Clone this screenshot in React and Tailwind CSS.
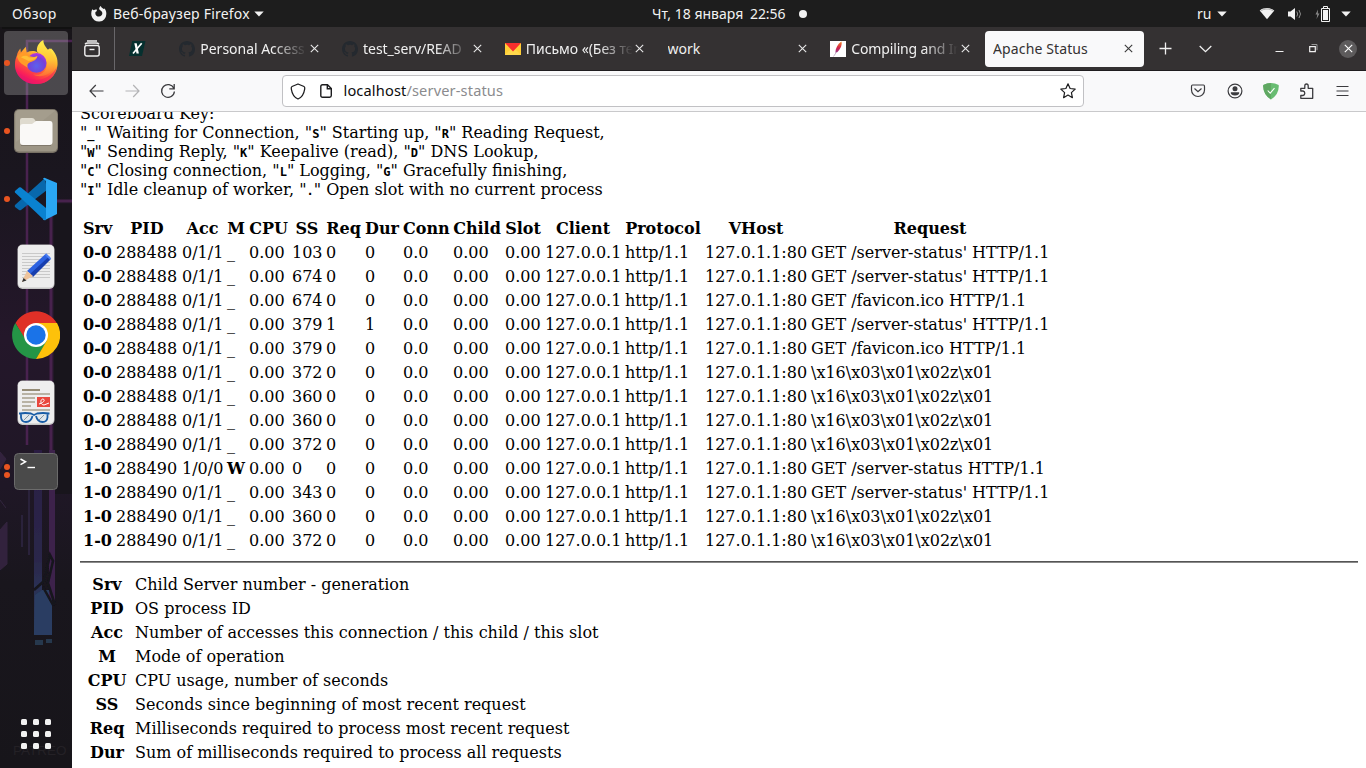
import React from "react";

const UI = "font-['Noto_Sans','Open_Sans',sans-serif]";

function Caret() {
  return (
    <svg width="10" height="6" viewBox="0 0 10 6" className="shrink-0"><path d="M0.3 0.5h9.4L5 5.5z" fill="#f2f2f2" /></svg>
  );
}

function TopBar() {
  return (
    <header className={`relative flex h-[27px] shrink-0 items-center bg-[#1d1d1d] text-[#f2f2f2] text-[14px] ${UI}`}>
      <span className="ml-3 w-[79px] whitespace-nowrap tracking-[0.4px]">Обзор</span>
      <svg width="16" height="16" viewBox="0 0 16 16" className="shrink-0">
        <path d="M1.3 3.2 2.7 4.3C4 3.3 5 3.3 6 3.7L5.6 5.2 4.5 6c-.8 2.6 1.2 4.6 3.5 4.6 2 0 3.6-1.5 3.3-3.8C10.800 5 9 4.500 8.200 3.300 8 2 8.700.800 9.800 0c.4 1.500 1.700 2 2.700 3l1-.400c1.300 1.500 2 3.500 1.800 5.600A7.500 7.500 0 0 1 .5 9.800C0 7.500.300 5 1.300 3.200z" fill="#f2f2f2" />
      </svg>
      <span className="ml-[6px] w-[137px] whitespace-nowrap tracking-[0.22px]">Веб-браузер Firefox</span>
      <span className="ml-[4px]"><Caret /></span>
      <div className="absolute left-[652px] top-0 flex h-[27px] items-center whitespace-nowrap">
        <span className="w-[98px] tracking-[0px]">Чт, 18 января</span>
        <span className="w-[37px] tracking-[-0.1px]">22:56</span>
        <span className="ml-[12px] size-2 rounded-full bg-[#f2f2f2]" />
      </div>
      <div className="ml-auto flex items-center pr-[15px]">
        <span className="w-[14px]">ru</span>
        <span className="ml-[6px]"><Caret /></span>
        <svg width="16" height="13" viewBox="0 0 16 13" className="ml-[32px]">
          <path d="M.7 3.500C5 .300 11 .300 15.300 3.500L8 12.300z" fill="#f2f2f2" />
          <path d="M1.300 4.300C5 1.300 11 1.300 14.700 4.300" fill="none" stroke="#999" strokeWidth=".7" />
        </svg>
        <svg width="16" height="14" viewBox="0 0 16 14" className="ml-[12px]">
          <path d="M1 4.500h2.500L8 1v12L3.500 9.500H1z" fill="#f2f2f2" />
          <path d="M9.800 4.500q1.800 2.500 0 5M12 3q3 4 0 8" fill="none" stroke="#8c8c8c" strokeWidth="1" />
        </svg>
        <svg width="15" height="16" viewBox="0 0 15 16" className="ml-[12px]">
          <path d="M3 3.500 .5 8.500h1.800l-.8 4.500L4.500 7.500H2.800z" fill="#8a8a8a" />
          <path d="M6.500 2.500h8v13h-8zM8.500 .5h4v2h-4z" fill="none" stroke="#f2f2f2" />
          <path d="M8 4h5v10H8z" fill="#f2f2f2" />
        </svg>
        <span className="ml-[11px]"><Caret /></span>
      </div>
    </header>
  );
}

function Wallpaper() {
  return (
    <svg className="absolute inset-0" width="72" height="741" viewBox="0 27 72 741">
      <defs>
        <linearGradient id="base" x1="0" y1="0" x2="0" y2="1">
          <stop offset="0" stopColor="#181519" />
          <stop offset=".2" stopColor="#1a161f" />
          <stop offset=".42" stopColor="#24172a" />
          <stop offset=".62" stopColor="#1f1726" />
          <stop offset=".75" stopColor="#19161d" />
          <stop offset="1" stopColor="#17151a" />
        </linearGradient>
        <linearGradient id="tower" x1="0" y1="0" x2="0" y2="1">
          <stop offset="0" stopColor="#2a1b42" />
          <stop offset=".6" stopColor="#29284b" />
          <stop offset="1" stopColor="#293f63" />
        </linearGradient>
        <filter id="soft" filterUnits="userSpaceOnUse" x="-10" y="20" width="100" height="760"><feGaussianBlur stdDeviation=".7" /></filter>
      </defs>
      <path d="M0 27h72v741H0z" fill="url(#base)" />
      <path d="M54 204h18v290H54z" fill="#18151c" />
      <g filter="url(#soft)">
        <path d="M27 445V41h45" fill="none" stroke="#49234f" strokeWidth="2.500" />
        <path d="M51 600V201h21" fill="none" stroke="#46224d" strokeWidth="3" />
        <path d="M34 450h8v185h-8z" fill="url(#tower)" />
        <path d="M42 590h10v45H35v-40z" fill="#293e62" />
        <path d="M49 450h6v150h-6z" fill="#3c214b" />
        <path d="M29 470v85M22 515v32" stroke="#2b213b" strokeWidth="2" />
        <path d="M0 530l7-8v42l-7 6M0 452l6 7-6 10M0 500l6 8" fill="#33243e" stroke="#33243e" />
        <path d="M34 590l10-9 6-26 3 6-5 22 7 22M43 587l10 18" stroke="#17151c" strokeWidth="2.500" fill="none" />
        <path d="M35 640h8v5h-8zM46 639h6v4h-6z" fill="#28374e" />
      </g>
      <path d="M2 28h70" stroke="#111" strokeWidth="2" />
      <text x="13" y="755" fill="#242126" fontSize="13.500" fontFamily="Liberation Sans">PATREO</text>
    </svg>
  );
}

function FirefoxIcon() {
  return (
    <svg width="45" height="46" viewBox="0 0 46 48" preserveAspectRatio="none" className="-mt-[2px] ml-px">
      <defs>
        <linearGradient id="ffA" x1=".85" y1="0" x2=".25" y2="1">
          <stop offset="0" stopColor="#fff44f" /><stop offset=".3" stopColor="#ffb52c" />
          <stop offset=".6" stopColor="#ff5a36" /><stop offset=".82" stopColor="#fa2059" /><stop offset="1" stopColor="#d90b80" />
        </linearGradient>
        <radialGradient id="ffB" cx=".5" cy=".65" r=".65">
          <stop offset="0" stopColor="#5b62ed" /><stop offset=".65" stopColor="#7540d8" /><stop offset="1" stopColor="#b833e1" />
        </radialGradient>
        <linearGradient id="ffC" x1=".5" y1="0" x2=".5" y2="1">
          <stop offset="0" stopColor="#fff04d" /><stop offset=".55" stopColor="#ffc436" /><stop offset="1" stopColor="#ff6c35" />
        </linearGradient>
      </defs>
      <path d="M3 17c.5-3 2-5 3.500-7l.5 4 5-6 1 6c4-2 8-2 11 0L38 10c5 5 7 11 6.500 17A22 22 0 0 1 23 47C9 47 .5 37 1 26c0-3 .8-6 2-9z" fill="url(#ffA)" />
      <path d="M30 1c-5 3-7 7-6.500 12 4 3 9 6 10 12 1 8-6 14-14 12 10 5 23-1 22-14-.5-8-4-8-5-14l-1 4C34 9 30 7 30 1z" fill="url(#ffC)" />
      <circle cx="23" cy="25" r="10.300" fill="url(#ffB)" />
      <path d="M3 18c4-5 9-5 12-1 2 2 6 2 9 1-1 4-4 5-7 6-3 1-4 3-3 6C10 27 5 26 3 18z" fill="#ff9b28" />
      <path d="M7 19c3-2 6-2 8 0 3 1 6 0 9-1-2 4-6 4-9 5z" fill="#ffbe35" />
      <path d="M2 31c8 14 31 18 42-2-3 13-12 18-21 18C12 47 4 40 2 31z" fill="#ee1763" opacity=".5" />
    </svg>
  );
}

function FilesIcon() {
  return (
    <svg width="44" height="44" viewBox="0 0 44 44">
      <rect width="44" height="44" rx="5" fill="#777064" />
      <rect x=".7" y="1" width="42.600" height="41.500" rx="4.500" fill="#9d9686" />
      <path d="M5 1h37L2 33V5q0-4 3-4z" fill="#a9a292" opacity=".6" />
      <path d="M6 14v-3q0-2 2-2h10q2 0 3 2l1 2h14q2 0 2 3v4H6z" fill="#dfdbcf" />
      <path d="M6 18q0-3 3-3h9l4-3h14q2.500 0 2.500 3v18q0 3-3 3H9q-3 0-3-3z" fill="#faf9f7" />
      <path d="M7 36.500h30" stroke="#746d61" strokeWidth=".7" />
    </svg>
  );
}

function CodeIcon() {
  return (
    <svg width="44" height="44" viewBox="0 0 44 44">
      <path d="M1 28 31 1l2 12L7 33q-1 .700-2 0l-4-3q-.500-1 0-2z" fill="#0868ad" />
      <path d="M31 1 43 6v31l-12 6q-1 .5-2-.5L32 40V4l-3-2.500q1-1 2-.5z" fill="#2aa7f4" />
      <path d="M1 14 5 10.500q1-.700 2 0L32 31v12q-1 .5-3-1L1 15.500q-.5-.700 0-1.500z" fill="#0a82d0" />
    </svg>
  );
}

function EditorIcon() {
  return (
    <svg width="38" height="46" viewBox="0 0 38 46">
      <rect x=".5" y=".5" width="37" height="44.500" rx="5" fill="#c5c5c5" />
      <rect x="1" y="1" width="36" height="42.500" rx="4.500" fill="#ededed" />
      <path d="M5 9.500h28M5 12.500h28M5 15.500h28M5 18.500h28M5 21.500h28M5 24.500h28M5 27.500h28M5 30.500h28M5 33.500h28" stroke="#c9c9c9" />
      <path d="m10 27 18.500-17 5 5L16 32z" fill="#2d62e1" />
      <path d="m13 30 18.500-17 2 2.500L16 33z" fill="#173eae" />
      <path d="m10 27 6 5-7 4-4 2 2-5z" fill="#edc39c" /><path d="m6.500 34 3 2.500L5 38z" fill="#333" />
      <path d="m28.500 10 5 5" stroke="#4d7ff2" strokeWidth="2" />
    </svg>
  );
}

function ChromeIcon() {
  return (
    <svg width="48" height="48" viewBox="0 0 48 48">
      <path d="M3.500 12A24 24 0 0 1 45 12.500H24v12L13.500 30z" fill="#df3027" />
      <path d="M3.300 12A24 24 0 0 0 24 48l11-18-21-1z" fill="#249546" />
      <path d="M24 12h21A24 24 0 0 1 24 48l10.500-18z" fill="#fdc10a" />
      <circle cx="24" cy="24" r="12" fill="#fff" /><circle cx="24" cy="24" r="9.700" fill="#1a73e8" />
    </svg>
  );
}

function ReaderIcon() {
  return (
    <svg width="38" height="46" viewBox="0 0 38 46">
      <rect x=".5" y=".5" width="37" height="44.500" rx="5" fill="#c5c5c5" />
      <rect x="1" y="1" width="36" height="42.500" rx="4.500" fill="#eee" />
      <path d="M5 10h18" stroke="#958c76" strokeWidth="2" />
      <path d="M5 14h28M5 18h13M5 22h13M5 26h9M5 30h28" stroke="#b9b3a5" strokeWidth="2" />
      <rect x="20" y="17" width="13" height="10" fill="#e9483e" />
      <path d="M22 24c4-1 7-4 4-5-3 0-3 6 1 6l5-2" fill="none" stroke="#fff" />
      <path d="M2 33.500h1q5-1 11 0l3 1.500 3-1.500q6-1 12 0h.5M4 33.500v4q.5 4.500 5 4.500 5 0 6.500-6M30.500 33.500v4q-.5 4.500-5 4.500-5 0-6.500-6" fill="#dfe7ec" stroke="#195da6" strokeWidth="1.800" />
      <path d="m7 40 5-5M22 40l5-5" stroke="#8996a0" />
    </svg>
  );
}

function TerminalIcon() {
  return (
    <svg width="44" height="37" viewBox="0 0 44 37">
      <rect x=".5" y=".5" width="43" height="36" rx="4" fill="#4a4a4a" stroke="#6b6b6b" />
      <path d="m6.500 6 5 2.800-5 2.800" fill="none" stroke="#fff" strokeWidth="1.500" /><path d="M13.500 14.500h7.500" stroke="#fff" strokeWidth="1.400" />
    </svg>
  );
}

function Dock() {
  const items = [
    [<FirefoxIcon />, 1, true], [<FilesIcon />, 1], [<CodeIcon />, 1], [<EditorIcon />, 0],
    [<ChromeIcon />, 0], [<ReaderIcon />, 0], [<TerminalIcon />, 2],
  ];
  return (
    <aside className="relative w-[72px] shrink-0 overflow-hidden">
      <Wallpaper />
      <nav className="relative flex h-full flex-col items-center gap-1 pt-1">
        {items.map(([icon, dots, active], i) => (
          <button key={i} className={`relative flex h-16 w-16 shrink-0 items-center justify-center rounded ${active ? "bg-[#c8c8c84a]" : ""}`}>
            {icon}
            <span className="absolute left-0 top-0 flex h-16 flex-col items-center justify-center gap-[2.500px]">
              {Array.from({ length: dots }, (_, k) => <i key={k} className="block size-[6px] rounded-full bg-[#e95420]" />)}
            </span>
          </button>
        ))}
        <div className="mt-auto mb-[19px] grid grid-cols-3 gap-[6px]">
          {Array.from({ length: 9 }, (_, k) => <i key={k} className="block size-[6px] rounded-[1.500px] bg-[#f2f2f2]" />)}
        </div>
      </nav>
    </aside>
  );
}

function Close({ color }) {
  return <svg width="9" height="9" viewBox="0 0 9 9" className="shrink-0"><path d="m.8.8 7.400 7.400M8.200.8.8 8.200" stroke={color} strokeWidth="1.100" /></svg>;
}

function GitHub() {
  return (
    <svg width="16" height="16" viewBox="0 0 16 16" className="shrink-0" fill="#24292f">
      <path d="M8 0C3.580 0 0 3.580 0 8c0 3.540 2.290 6.530 5.470 7.590.4.070.55-.17.55-.38 0-.19-.01-.82-.01-1.490-2.010.37-2.530-.49-2.690-.94-.09-.23-.48-.94-.82-1.130-.28-.15-.68-.52-.01-.53.63-.01 1.080.58 1.230.82.72 1.210 1.870.87 2.330.66.070-.52.280-.87.510-1.070-1.780-.2-3.640-.89-3.640-3.950 0-.87.310-1.590.82-2.150-.080-.2-.360-1.020.080-2.120 0 0 .67-.21 2.200.82A7.600 7.600 0 0 1 8 3.860c.68 0 1.360.090 2 .270 1.530-1.040 2.200-.82 2.200-.82.44 1.100.160 1.920.080 2.120.510.560.820 1.270.820 2.150 0 3.070-1.870 3.750-3.650 3.950.290.250.540.730.540 1.480 0 1.070-.010 1.930-.010 2.200 0 .210.150.460.550.380A8 8 0 0 0 16 8c0-4.420-3.580-8-8-8z" />
    </svg>
  );
}

function Mail() {
  return <svg width="16" height="12" viewBox="0 0 16 12" className="shrink-0"><path d="M0 0h16v12H0z" fill="#ffcf36" /><path d="M0 12 7 5h2l7 7z" fill="#ffd84b" /><path d="M0 0h16L8 8.500z" fill="#f7302d" /></svg>;
}

function Feather() {
  return (
    <svg width="16" height="16" viewBox="0 0 16 16" className="shrink-0">
      <defs><linearGradient id="quill" x1="0" y1="1" x2="0" y2="0"><stop offset="0" stopColor="#8a3b8f" /><stop offset=".45" stopColor="#d2224b" /><stop offset="1" stopColor="#f58a20" /></linearGradient></defs>
      <path d="M0 0h16v16H0z" fill="#fff" />
      <path d="M11.500.5c.8 3-.5 7-4 10.500l-2 1C5 8 8 2.500 11.500.5z" fill="url(#quill)" /><path d="m6.500 11-3 4.500" stroke="#c9b5cc" />
    </svg>
  );
}

const tabs = [
  { title: "Personal Access", icon: <GitHub />, cls: "tracking-[-0.02px]" },
  { title: "test_serv/READ", icon: <GitHub />, cls: "tracking-[-0.05px]" },
  { title: "Письмо «(Без те", icon: <Mail />, cls: "tracking-[-0.05px]" },
  { title: "work", cls: "tracking-[0px]" },
  { title: "Compiling and In", icon: <Feather />, cls: "tracking-[-0.15px]" },
  { title: "Apache Status", cls: "tracking-[0.12px]", active: true },
];

function TabBar() {
  return (
    <div className={`flex h-11 shrink-0 items-center border-b border-[#1f1d1f] bg-[#343132] text-[14px] text-[#f0f0f0] ${UI}`}>
      <div className="flex h-full w-[43px] shrink-0 items-center justify-center border-r border-[#69676a] pr-[2px]">
        <svg width="16" height="17" viewBox="0 0 16 17" fill="none" stroke="#f0f0f0" strokeWidth="1.400">
          <path d="M3 1h10M1 4.200q1-1.200 3-1.200h8q2 0 3 1.200" /><rect x=".8" y="5.500" width="14.400" height="10.500" rx="2" /><path d="M5.500 9.500h5" />
        </svg>
      </div>
      <div className="flex w-[54.500px] shrink-0 pl-[14px]">
        <svg width="17" height="15" viewBox="0 0 17 15">
          <path d="M3.200 0H16.500L13 15H0z" fill="#06302f" />
          <path d="M5.300 2.300h2.400L9.900 12.500H7.500z" fill="#fff" /><path d="M12.700 2.300 4 12.500" stroke="#fff" strokeWidth="1.700" />
        </svg>
      </div>
      {tabs.map((t) => (
        <div key={t.title} className="w-[162.750px] shrink-0 px-[1.800px]">
          <div className={`flex h-9 items-center rounded pl-2 pr-[11.500px] ${t.active ? "bg-[#f9f9fa] text-[#343132]" : ""}`}>
            {t.icon}
            <span className={`min-w-0 flex-1 overflow-hidden whitespace-nowrap ${t.cls} ${t.icon ? "ml-[5px] [mask-image:linear-gradient(to_right,#000_68%,transparent)]" : ""}`}>{t.title}</span>
            <span className="ml-[2.500px] flex"><Close color={t.active ? "#3a3a3a" : "#e8e8e8"} /></span>
          </div>
        </div>
      ))}
      <div className="flex flex-1 items-center pl-[13px]">
        <svg width="13" height="13" viewBox="0 0 13 13"><path d="M6.500.5v12M.5 6.500h12" stroke="#f0f0f0" strokeWidth="1.300" /></svg>
        <svg width="13" height="8" viewBox="0 0 13 8" className="ml-[27px]"><path d="m.7 1 5.800 5.700L12.300 1" fill="none" stroke="#f0f0f0" strokeWidth="1.300" /></svg>
        <svg width="9" height="8" viewBox="0 0 9 8" className="ml-[63px]"><path d="M.5 6.500h8" stroke="#f0f0f0" /></svg>
        <svg width="9" height="9" viewBox="0 0 9 9" className="ml-[25px]" fill="none"><path d="M.7 2.700h5.600v5H.7z" stroke="#f0f0f0" strokeWidth="1.200" /><path d="M2.500.5h5.500v5.700" stroke="#999" /></svg>
        <span className="ml-[21px] flex size-[18px] items-center justify-center rounded-full bg-[#5d5b5c]"><Close color="#fff" /></span>
      </div>
    </div>
  );
}

function Toolbar() {
  return (
    <div className={`flex h-[41px] shrink-0 items-center border-b border-[#c9c9cb] bg-[#f9f9fa] ${UI}`}>
      <svg width="15" height="14" viewBox="0 0 15 14" className="ml-[16.500px]" fill="none" stroke="#3b3b3e" strokeWidth="1.200"><path d="M14.500 7H1M6.800 1 1 7l5.800 6" /></svg>
      <svg width="15" height="14" viewBox="0 0 15 14" className="ml-[21px]" fill="none" stroke="#b3b3b5" strokeWidth="1.200"><path d="M.5 7H14M8.200 1 14 7l-5.800 6" /></svg>
      <svg width="16" height="16" viewBox="0 0 16 16" className="ml-[20.500px]" fill="none" stroke="#3b3b3e" strokeWidth="1.300"><path d="M13.800 5.200A6.400 6.400 0 1 0 14.400 8.500M14.200 1v4.800H9.300" /></svg>
      <div className="ml-[106px] flex h-8 w-[802px] items-center rounded border border-[#c1c1c4] bg-white">
        <svg width="16" height="17" viewBox="0 0 16 17" className="ml-[7px]" fill="none" stroke="#1c1c1e" strokeWidth="1.300"><path d="M8 1 14 3.500Q15 4 14.700 6C14 10.500 12 14.500 8 16 4 14.500 2 10.500 1.300 6Q1 4 2 3.500z" strokeLinejoin="round" /></svg>
        <svg width="12" height="14" viewBox="0 0 12 14" className="ml-[14px]" fill="none" stroke="#1c1c1e" strokeWidth="1.400"><path d="M2.500.8H7.500L11.300 4.500v7q0 1.700-1.700 1.700h-7Q.8 13.200.8 11.500v-9Q.8.8 2.500.8zM7.300 1v3.700h4" /></svg>
        <span className="ml-[11.500px] whitespace-nowrap text-[14.600px] tracking-[0.14px] text-[#0c0c0d]">localhost<span className="text-[#8b8b8e]">/server-status</span></span>
        <svg width="16" height="16" viewBox="0 0 16 16" className="ml-auto mr-[7px]" fill="none" stroke="#1c1c1e" strokeWidth="1.200" strokeLinejoin="round"><path d="m8 .8 2.100 4.700 5.100.6-3.800 3.500 1 5.100L8 12.100l-4.400 2.600 1-5.100L.8 6.100l5.100-.6z" /></svg>
      </div>
      <svg width="16" height="14" viewBox="0 0 16 14" className="ml-[106px]" fill="none" stroke="#3b3b3e" strokeWidth="1.200"><path d="M2.500 1h11Q14.500 1 14.500 2.500V6A6.500 6.500 0 0 1 1.500 6V2.500Q1.500 1 2.500 1zM4.500 4.500 8 7.800l3.500-3.300" /></svg>
      <svg width="16" height="16" viewBox="0 0 16 16" className="ml-[20.500px]" fill="none"><circle cx="8" cy="8" r="6.900" stroke="#3b3b3e" strokeWidth="1.200" /><circle cx="8" cy="5.800" r="2.500" fill="#3b3b3e" /><path d="M3.800 9.200h8.400q.5 3-4.200 3.400Q3.300 12.200 3.800 9.200z" fill="#3b3b3e" /></svg>
      <svg width="16" height="17" viewBox="0 0 16 17" className="ml-[20px]"><path d="M8 0q4 .2 7.700 2Q16.500 11 8 16.500-.5 11 .3 2 4 .2 8 0z" fill="#68bc71" /><path d="M8 0Q4 .2.300 2-.5 11 8 16.500z" fill="#60a862" /><path d="m4.700 7.500 2.500 2.700 4.300-5" fill="none" stroke="#fff" strokeWidth="1.100" /></svg>
      <svg width="16" height="17" viewBox="0 0 16 17" className="ml-[20px]" fill="none" stroke="#3b3b3e" strokeWidth="1.300" strokeLinejoin="round"><path d="M1.800 8V5.300h4V3q0-2 1.700-2t1.700 2v2.300h4.500v10H1.800v-2.800H4q1.800-.3 1.800-2.200T4 8z" /></svg>
      <svg width="13" height="12" viewBox="0 0 13 12" className="ml-[21px]"><path d="M.5 1.500h12M.5 6h12M.5 10.500h12" stroke="#3b3b3e" strokeWidth="1.200" /></svg>
    </div>
  );
}

const K = ({ c }) => <>"<b className="font-['DejaVu_Sans_Mono',monospace] text-[12px] leading-none">{c}</b>"</>;

const heads = ["Srv", "PID", "Acc", "M", "CPU", "SS", "Req", "Dur", "Conn", "Child", "Slot", "Client", "Protocol", "VHost", "Request"];
const colWidths = [31, 64, 43, 20, 41, 32, 37, 36, 48, 50, 38, 78, 78, 104, 240];
const status = "GET /server-status' HTTP/1.1";
const fav = "GET /favicon.ico HTTP/1.1";
const hex = "\\x16\\x03\\x01\\x02z\\x01";
const rows = [
  ["0-0", "288488", "0/1/1", "_", "103", "0", "0", status],
  ["0-0", "288488", "0/1/1", "_", "674", "0", "0", status],
  ["0-0", "288488", "0/1/1", "_", "674", "0", "0", fav],
  ["0-0", "288488", "0/1/1", "_", "379", "1", "1", status],
  ["0-0", "288488", "0/1/1", "_", "379", "0", "0", fav],
  ["0-0", "288488", "0/1/1", "_", "372", "0", "0", hex],
  ["0-0", "288488", "0/1/1", "_", "360", "0", "0", hex],
  ["0-0", "288488", "0/1/1", "_", "360", "0", "0", hex],
  ["1-0", "288490", "0/1/1", "_", "372", "0", "0", hex],
  ["1-0", "288490", "1/0/0", "W", "0", "0", "0", "GET /server-status HTTP/1.1"],
  ["1-0", "288490", "0/1/1", "_", "343", "0", "0", status],
  ["1-0", "288490", "0/1/1", "_", "360", "0", "0", hex],
  ["1-0", "288490", "0/1/1", "_", "372", "0", "0", hex],
];

const legend = [
  ["Srv", "Child Server number - generation"],
  ["PID", "OS process ID"],
  ["Acc", "Number of accesses this connection / this child / this slot"],
  ["M", "Mode of operation"],
  ["CPU", "CPU usage, number of seconds"],
  ["SS", "Seconds since beginning of most recent request"],
  ["Req", "Milliseconds required to process most recent request"],
  ["Dur", "Sum of milliseconds required to process all requests"],
];

function StatusPage() {
  return (
    <main className="min-h-0 flex-1 overflow-hidden bg-white px-2 font-['DejaVu_Serif',serif] text-[16px] leading-[19px] text-black">
      <div className="-mt-[8px] whitespace-nowrap">
        <p>Scoreboard Key:</p>
        <p><K c="_" /> Waiting for Connection, <K c="S" /> Starting up, <K c="R" /> Reading Request,</p>
        <p><K c="W" /> Sending Reply, <K c="K" /> Keepalive (read), <K c="D" /> DNS Lookup,</p>
        <p><K c="C" /> Closing connection, <K c="L" /> Logging, <K c="G" /> Gracefully finishing,</p>
        <p><K c="I" /> Idle cleanup of worker, <K c="." /> Open slot with no current process</p>
      </div>
      <table className="mt-[16px] w-[972px] table-fixed border-separate border-spacing-[2px] whitespace-nowrap">
        <colgroup>{colWidths.map((w, i) => <col key={i} style={{ width: w }} />)}</colgroup>
        <thead>
          <tr className="h-[22px]">{heads.map((h) => <th key={h} className="p-px text-center font-bold">{h}</th>)}</tr>
        </thead>
        <tbody>
          {rows.map(([srv, pid, acc, m, ss, req, dur, request], i) => (
            <tr key={i} className="h-[22px]">
              {[<b>{srv}</b>, pid, acc, m === "W" ? <b>W</b> : m, "0.00", ss, req, dur, "0.0", "0.00", "0.00", "127.0.0.1", "http/1.1", "127.0.1.1:80", request].map((c, k) => (
                <td key={k} className="p-px">{c}</td>
              ))}
            </tr>
          ))}
        </tbody>
      </table>
      <hr className="mt-[8px] mb-[8px] h-[2px] border-0 border-t border-b border-t-[#555] border-b-[#8a8a8a]" />
      <table className="w-[560px] table-fixed border-separate border-spacing-[2px] whitespace-nowrap">
        <colgroup><col className="w-[50px]" /><col /></colgroup>
        <tbody>
          {legend.map(([k, v]) => (
            <tr key={k} className="h-[22px]"><th className="p-px text-center font-bold">{k}</th><td className="p-px pl-[1px]">{v}</td></tr>
          ))}
        </tbody>
      </table>
    </main>
  );
}

export default function App() {
  return (
    <div className="flex h-[768px] w-[1366px] flex-col overflow-hidden bg-black">
      <TopBar />
      <div className="flex min-h-0 flex-1">
        <Dock />
        <section className="flex min-w-0 flex-1 flex-col">
          <TabBar />
          <Toolbar />
          <StatusPage />
        </section>
      </div>
    </div>
  );
}
